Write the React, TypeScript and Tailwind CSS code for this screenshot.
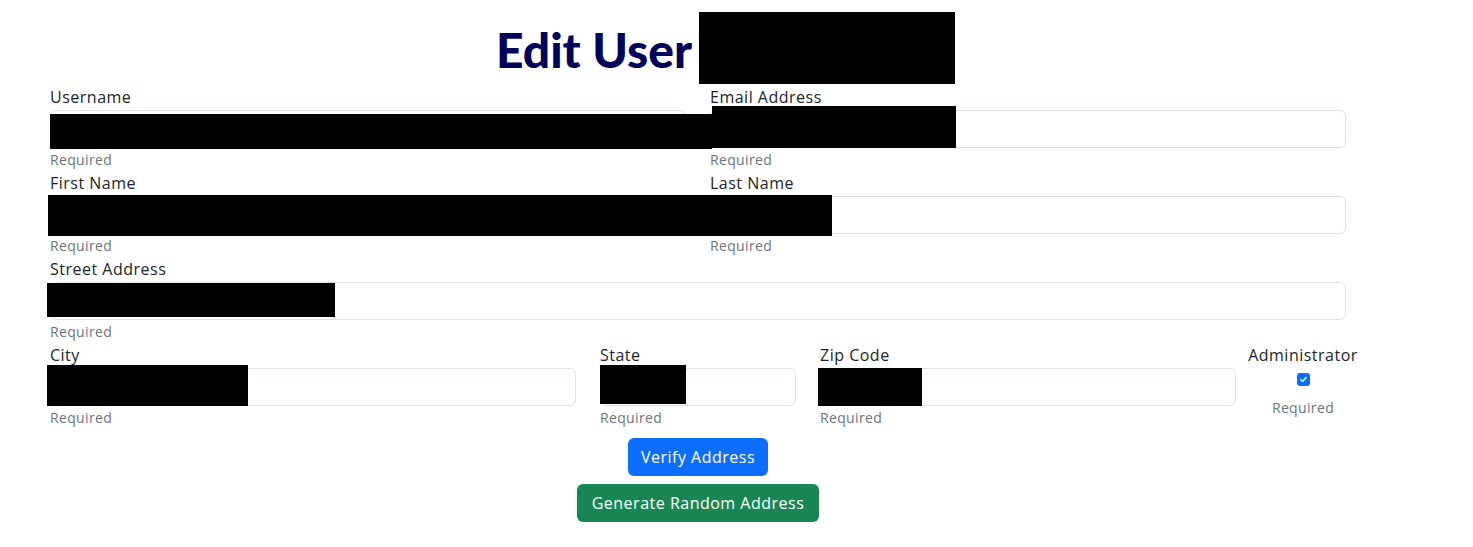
import React from "react";

const font = { fontFamily: '"Open Sans", "Noto Sans", sans-serif' };

function Field({ label, className = "" }: { label: string; className?: string }) {
  return (
    <div className={"px-3 " + className}>
      <div className="h-[25px] leading-[25px] text-[16px] tracking-[0.5px] text-[#212529] whitespace-nowrap">{label}</div>
      <div className="h-[38px] w-full border border-[#dee2e6] rounded-[6px] bg-white" />
      <div className="h-[23px] leading-[24px] text-[14px] tracking-[0.35px] text-[#6c757d]">Required</div>
    </div>
  );
}

const boxes: [number, number, number, number][] = [
  [699, 12, 256, 72],
  [50, 114, 662, 35],
  [712, 106, 244, 42],
  [48, 195, 784, 41],
  [47, 283, 288, 34],
  [47, 365, 201, 41],
  [600, 365, 86, 39],
  [818, 368, 104, 38],
];

export default function App() {
  return (
    <div className="relative w-full h-[547px] bg-white overflow-hidden" style={font}>
      <div className="ml-[38px] w-[1320px]">
        <div className="h-[85px] flex items-center justify-center pt-[14px]">
          <h1
            className="text-[48px] leading-none font-black text-[#02025a] whitespace-nowrap"
            style={{ fontFamily: 'Lato, "Noto Sans", sans-serif' }}
          >
            Edit User<span className="inline-block w-[208px]" />
          </h1>
        </div>
        <div className="grid grid-cols-2">
          <Field label="Username" />
          <Field label="Email Address" />
          <Field label="First Name" />
          <Field label="Last Name" />
          <Field label="Street Address" className="col-span-2" />
        </div>
        <div className="grid grid-cols-12">
          <Field label="City" className="col-span-5" />
          <Field label="State" className="col-span-2" />
          <Field label="Zip Code" className="col-span-4" />
          <div className="col-span-1 flex flex-col items-center">
            <div className="h-6 leading-6 text-[16px] tracking-[0.5px] text-[#212529] whitespace-nowrap">Administrator</div>
            <span className="mt-[6px] w-[13px] h-[13px] rounded-[3px] bg-[#0d6efd] flex items-center justify-center">
              <svg width="9" height="9" viewBox="0 0 20 20" fill="none">
                <path d="M4 10.5l4 4 8-9" stroke="white" strokeWidth="3.2" strokeLinecap="round" strokeLinejoin="round" />
              </svg>
            </span>
            <div className="mt-[10px] h-6 leading-6 text-[14px] tracking-[0.35px] text-[#6c757d]">Required</div>
          </div>
        </div>
        <div className="mt-[9px] flex flex-col items-center gap-2">
          <button className="w-[140px] h-[38px] rounded-[6px] bg-[#0d6efd] text-white text-[16px] tracking-[0.5px]">Verify Address</button>
          <button className="w-[242px] h-[38px] rounded-[6px] bg-[#198754] text-white text-[16px] tracking-[0.5px]">Generate Random Address</button>
        </div>
      </div>
      {boxes.map(([x, y, w, h], i) => (
        <div key={i} className="absolute bg-black" style={{ left: x, top: y, width: w, height: h }} />
      ))}
    </div>
  );
}
